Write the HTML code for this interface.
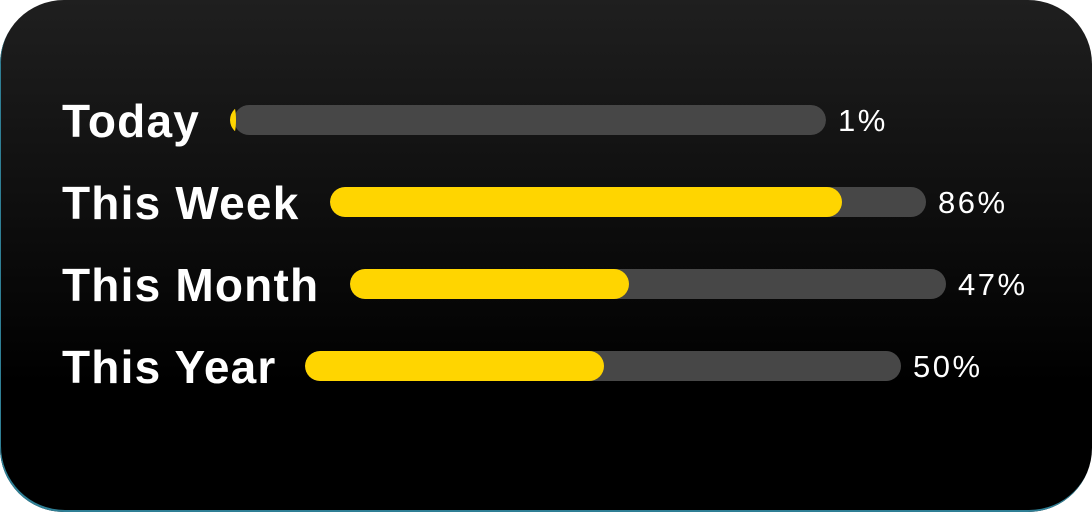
<!DOCTYPE html><html><head><style>
html,body{margin:0;padding:0;background:#fff;width:1092px;height:512px;overflow:hidden}
.card{position:absolute;left:0;top:0;width:1092px;height:512px;border-radius:64px;background:linear-gradient(#1f1f1f,#000 75%);box-shadow:inset 1px -2px 0 #2f7f95;}
.l{position:absolute;left:62px;color:#fff;font:bold 46px "Liberation Sans",sans-serif;line-height:46px;letter-spacing:1.2px}
.b{position:absolute;height:30px;width:596px;border-radius:15px;background:#474747;overflow:hidden}
.f{height:30px;border-radius:15px;background:#FFD500}
.p{position:absolute;color:#fff;font:31px "Liberation Sans",sans-serif;line-height:30px;letter-spacing:2.5px}
</style></head><body><div class="card">
<div class="l" style="top:98px">Today</div>
<div class="b" style="left:230px;top:105px;background:transparent"><div style="position:absolute;left:4px;top:0;width:592px;height:30px;border-radius:15px;background:#474747"></div><div style="position:absolute;left:0;top:0;width:6px;height:30px;border-radius:50%;background:#FFD500"></div></div>
<div class="p" style="left:838px;top:106px">1%</div>
<div class="l" style="top:180px">This Week</div>
<div class="b" style="left:330px;top:187px"><div class="f" style="width:512px"></div></div>
<div class="p" style="left:938px;top:188px">86%</div>
<div class="l" style="top:262px">This Month</div>
<div class="b" style="left:350px;top:269px"><div class="f" style="width:279px"></div></div>
<div class="p" style="left:958px;top:270px">47%</div>
<div class="l" style="top:344px">This Year</div>
<div class="b" style="left:305px;top:351px"><div class="f" style="width:299px"></div></div>
<div class="p" style="left:913px;top:352px">50%</div>
</div></body></html>
